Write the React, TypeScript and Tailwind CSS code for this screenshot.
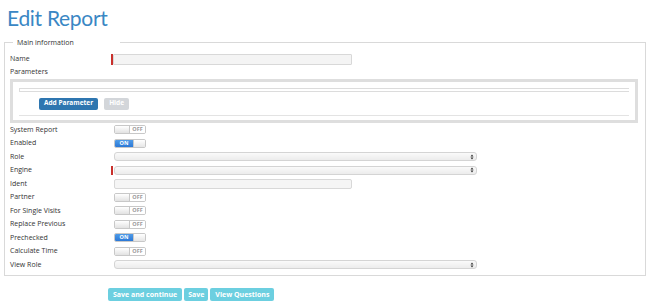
import React from "react";

const font = { fontFamily: '"Open Sans", "Liberation Sans", sans-serif' };

function Toggle({ on }: { on?: boolean }) {
  if (on) {
    return (
      <div className="flex h-[9px] w-[32px] overflow-hidden rounded-[2px] border border-[#c8c8c8]">
        <div className="flex w-[18px] items-center justify-center bg-gradient-to-b from-[#4f9be8] to-[#2b78d6] text-[5.5px] font-bold leading-none text-white">
          ON
        </div>
        <div className="flex-1 bg-gradient-to-b from-white to-[#e6e6e6] border-l border-[#c8c8c8]" />
      </div>
    );
  }
  return (
    <div className="flex h-[9px] w-[32px] overflow-hidden rounded-[2px] border border-[#c8c8c8]">
      <div className="w-[14px] bg-gradient-to-b from-white to-[#e2e2e2]" />
      <div className="flex flex-1 items-center justify-center border-l border-[#c8c8c8] bg-white text-[5.5px] font-bold leading-none text-[#999]">
        OFF
      </div>
    </div>
  );
}

function Input() {
  return <div className="h-[10px] w-[238px] rounded-[2px] border border-[#d8d8d8] bg-[#f5f5f5]" />;
}

function Select({ required }: { required?: boolean }) {
  return (
    <div className="relative">
      {required && <div className="absolute left-[-3px] top-0 h-full w-[2px] bg-[#c9302c]" />}
      <div className="flex h-[9px] w-[363px] items-center justify-end rounded-[3px] border border-[#d4d4d4] bg-gradient-to-b from-[#fafafa] to-[#ececec] pr-[2px]">
        <svg width="4" height="6" viewBox="0 0 4 6">
          <path d="M0.5 2.5 L2 0.5 L3.5 2.5 Z" fill="#333" />
          <path d="M0.5 3.5 L2 5.5 L3.5 3.5 Z" fill="#333" />
        </svg>
      </div>
    </div>
  );
}

function Row({ label, children }: { label: string; children?: React.ReactNode }) {
  return (
    <div className="flex h-[13.5px] items-center">
      <div className="w-[104px] text-[7px] text-[#333]">{label}</div>
      <div>{children}</div>
    </div>
  );
}

export default function App() {
  return (
    <div className="h-[304px] w-[652px] overflow-hidden bg-white" style={font}>
      <h1
        className="pl-[7px] pt-[4px] text-[21px] leading-[28px] font-normal tracking-[-0.3px] text-[#3a87c4]"
        style={{ fontFamily: 'Lato, "Open Sans", sans-serif' }}
      >
        Edit Report
      </h1>
      <fieldset className="ml-[4px] mr-[6px] mt-[6px] border border-[#d9d9d9] px-[5px] pb-[3px] pt-[6px]">
        <legend className="ml-[3px] pl-[4px] pr-[46px] text-[7px] leading-[9px] text-[#333]">Main information</legend>
        <div className="flex h-[13px] items-center">
          <div className="w-[101px] text-[7px] text-[#333]">Name</div>
          <div className="relative">
            <div className="absolute left-0 top-0 h-full w-[2px] bg-[#c9302c]" />
            <div className="ml-[2px] h-[11px] w-[239px] rounded-[1px] border border-[#d8d8d8] bg-[#f4f4f4]" />
          </div>
        </div>
        <div className="flex h-[13px] items-center text-[7px] text-[#333]">Parameters</div>
        <div className="mr-[2px] h-[44px] border-[3px] border-[#dedede] px-[6px] pt-[6px]">
          <div className="h-[4px] border border-[#dcdcdc] border-r-0" />
          <div className="flex h-[24px] items-center gap-[6px] border-b border-[#e3e3e3] pl-[20px]">
            <button className="h-[12px] rounded-[2px] bg-[#2e76b0] px-[5px] text-[6.5px] font-bold leading-none text-white">
              Add Parameter
            </button>
            <button className="h-[12px] rounded-[2px] bg-[#d3d6da] px-[5px] text-[6.5px] font-bold leading-none text-white">
              Hide
            </button>
          </div>
        </div>
        <div>
          <Row label="System Report"><Toggle /></Row>
          <Row label="Enabled"><Toggle on /></Row>
          <Row label="Role"><Select /></Row>
          <Row label="Engine"><Select required /></Row>
          <Row label="Ident"><Input /></Row>
          <Row label="Partner"><Toggle /></Row>
          <Row label="For Single Visits"><Toggle /></Row>
          <Row label="Replace Previous"><Toggle /></Row>
          <Row label="Prechecked"><Toggle on /></Row>
          <Row label="Calculate Time"><Toggle /></Row>
          <Row label="View Role"><Select /></Row>
        </div>
      </fieldset>
      <div className="mt-[12px] flex gap-[2px] pl-[108px]">
        <button className="h-[13px] rounded-[2px] bg-[#6ccfe0] px-[5px] text-[7px] font-bold leading-none text-white">Save and continue</button>
        <button className="h-[13px] rounded-[2px] bg-[#6ccfe0] px-[4px] text-[7px] font-bold leading-none text-white">Save</button>
        <button className="h-[13px] rounded-[2px] bg-[#6ccfe0] px-[5px] text-[7px] font-bold leading-none text-white">View Questions</button>
      </div>
    </div>
  );
}
